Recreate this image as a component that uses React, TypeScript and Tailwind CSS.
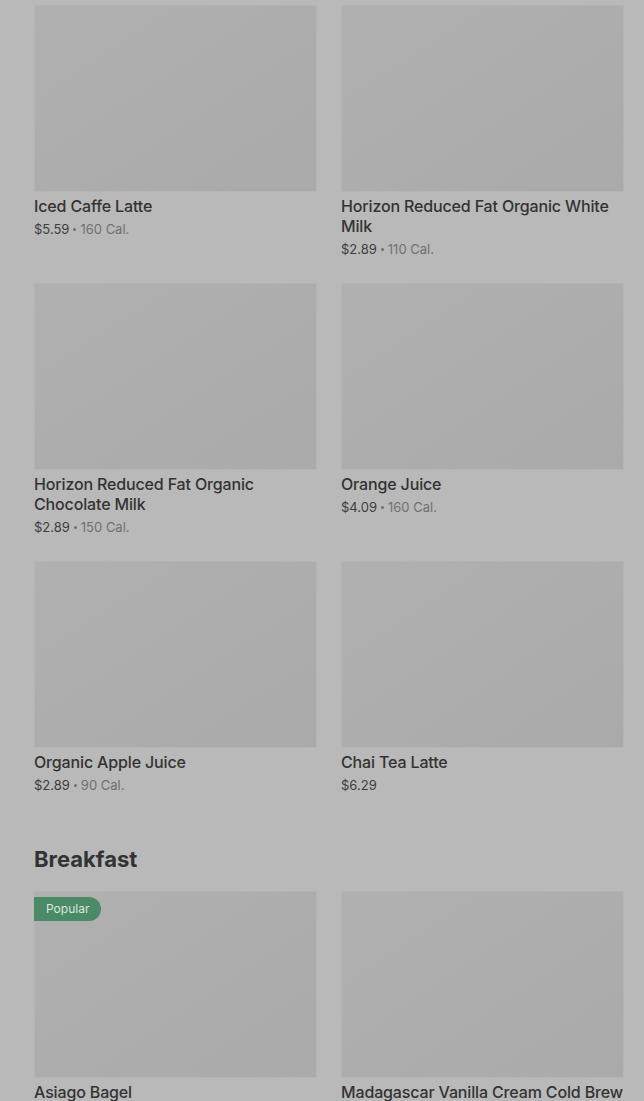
const drinks = [
  { name: "Iced Caffe Latte", price: "$5.59", cal: "160 Cal." },
  { name: "Horizon Reduced Fat Organic White Milk", price: "$2.89", cal: "110 Cal." },
  { name: "Horizon Reduced Fat Organic Chocolate Milk", price: "$2.89", cal: "150 Cal." },
  { name: "Orange Juice", price: "$4.09", cal: "160 Cal." },
  { name: "Organic Apple Juice", price: "$2.89", cal: "90 Cal." },
  { name: "Chai Tea Latte", price: "$6.29", cal: "" },
];

const breakfast = [
  { name: "Asiago Bagel", price: "$2.95", cal: "310 Cal.", popular: true },
  { name: "Madagascar Vanilla Cream Cold Brew", price: "$6.45", cal: "190 Cal." },
];

const ItemCard = (props: {
  name: string;
  price: string;
  cal: string;
  popular?: boolean;
}) => {
  return (
    <div className="flex flex-col">
      <div className="relative h-[187px] w-full border border-[#b4b4b4] bg-gradient-to-br from-[#b0b0b0] to-[#aaaaaa]">
        {props.popular && (
          <div className="absolute left-[-1px] top-[5px] rounded-r-full bg-[#4a8a66] px-3 text-[12px] leading-6 text-[#dbe7df]">
            Popular
          </div>
        )}
      </div>
      <div className="mt-[4px] text-[16px] font-medium leading-5 tracking-[-0.15px] text-[#333333]">
        {props.name}
      </div>
      <div className="mt-[4px] flex h-[18px] items-center gap-[4px] text-[13px] leading-[18px] text-[#3d3d3d]">
        <span>{props.price}</span>
        {props.cal && (
          <>
            <span className="h-[3px] w-[3px] rounded-full bg-[#707070]" />
            <span className="text-[#707070]">{props.cal}</span>
          </>
        )}
      </div>
    </div>
  );
};

export default function App() {
  return (
    <div
      className="min-h-[1101px] w-full overflow-hidden bg-[#b9b9b9] pl-[34px] pr-[20px] pt-[5px]"
      style={{ fontFamily: "Inter, 'Noto Sans', sans-serif" }}
    >
      <div className="grid grid-cols-2 gap-x-6 gap-y-[25px]">
        {drinks.map((d) => (
          <ItemCard key={d.name} {...d} />
        ))}
      </div>
      <h2 className="mt-[49px] text-[22px] font-bold leading-8 text-[#333333]">
        Breakfast
      </h2>
      <div className="mt-[16px] grid grid-cols-2 gap-x-6 gap-y-[25px]">
        {breakfast.map((d) => (
          <ItemCard key={d.name} {...d} />
        ))}
      </div>
    </div>
  );
}
